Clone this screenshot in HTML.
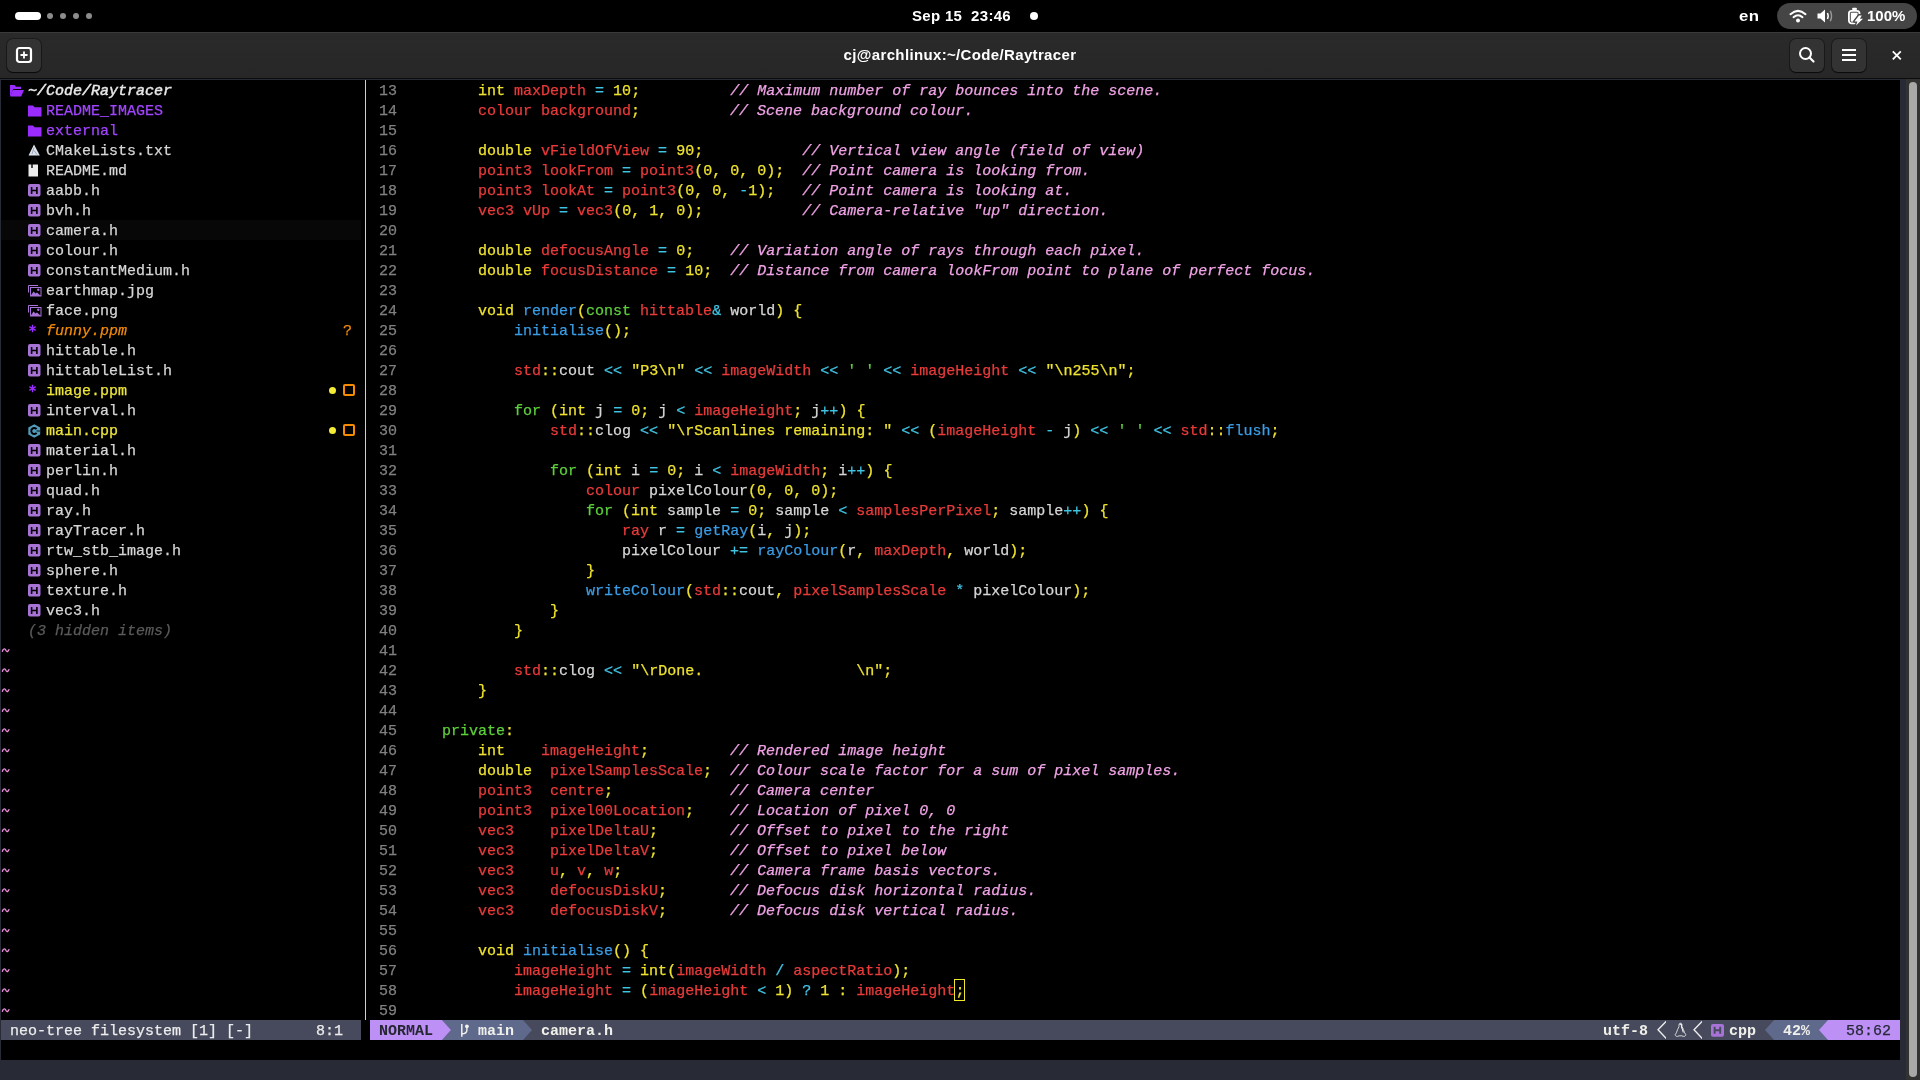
<!DOCTYPE html>
<html><head><meta charset="utf-8"><style>
*{margin:0;padding:0;box-sizing:border-box}
html,body{width:1920px;height:1080px;overflow:hidden;background:#000}
body{position:relative;font-family:"Liberation Sans",sans-serif}
#term{position:absolute;left:0;top:0;width:1920px;height:1080px;will-change:transform}
.row{position:absolute;height:20px;line-height:20px;white-space:pre;font-family:"Liberation Mono",monospace;font-size:15px;color:#d6d6d6;-webkit-text-stroke:0.25px currentColor}
.ic{position:absolute}
.yel{color:#eee22e} .red{color:#ea3a3a} .grn{color:#5cd03a} .blu{color:#3a9de6} .cya{color:#40c4e4} .wht{color:#d6d6d6}
.cmt{color:#f0a2e6;font-style:italic}
.lnr{color:#808080}
.root{color:#e8e8e8;font-style:italic;-webkit-text-stroke:0.45px #e8e8e8}
.dirn{color:#a244ff}
.fn{color:#d6d6d6}
.untr{color:#f28a0a;font-style:italic}
.modn{color:#ece43a}
.orn{color:#f28a0a}
.star{color:#9a2cff}
.hid{color:#5a5a5a;font-style:italic}
.tilde{color:#e07ad0}
.stw{color:#ececec}
.stb{color:#f0f0ea;font-weight:bold;-webkit-text-stroke:0}
.stn{color:#262633;font-weight:bold;-webkit-text-stroke:0}
.stn2{color:#262836}
.dot{position:absolute;width:7.5px;height:7.5px;border-radius:50%;background:#f4ec36}
.sq{position:absolute;width:12px;height:12px;border:2px solid #f88a00;border-radius:2px}
</style></head><body>
<!-- top bar -->
<div style="position:absolute;left:0;top:0;width:1920px;height:32px;background:#000"></div>
<div style="position:absolute;left:15px;top:12px;width:26px;height:8px;border-radius:4px;background:#fff"></div>
<div style="position:absolute;left:47px;top:13px;width:6px;height:6px;border-radius:50%;background:#8c8c8c"></div>
<div style="position:absolute;left:60px;top:13px;width:6px;height:6px;border-radius:50%;background:#8c8c8c"></div>
<div style="position:absolute;left:73px;top:13px;width:6px;height:6px;border-radius:50%;background:#8c8c8c"></div>
<div style="position:absolute;left:86px;top:13px;width:6px;height:6px;border-radius:50%;background:#8c8c8c"></div>
<div style="position:absolute;left:912px;top:5px;height:22px;line-height:22px;font-size:15px;font-weight:bold;color:#fff;white-space:pre;letter-spacing:0.3px;will-change:transform">Sep 15  23:46</div>
<div style="position:absolute;left:1030px;top:12px;width:8px;height:8px;border-radius:50%;background:#fff"></div>
<div style="position:absolute;left:1739px;top:5px;height:22px;line-height:22px;font-size:15px;font-weight:bold;color:#fff;letter-spacing:0.4px;transform:scaleX(1.12);transform-origin:0 0;will-change:transform">en</div>
<div style="position:absolute;left:1777px;top:3px;width:140px;height:26px;border-radius:13px;background:#454545"></div>
<svg style="position:absolute;left:1789px;top:9px" width="18" height="14" viewBox="0 0 18 14"><path d="M1.5 5.2Q9 -1.5 16.5 5.2" stroke="#fff" stroke-width="2" fill="none" stroke-linecap="round"/><path d="M4.5 8.2Q9 4.2 13.5 8.2" stroke="#fff" stroke-width="2" fill="none" stroke-linecap="round"/><circle cx="9" cy="11.5" r="2" fill="#fff"/></svg>
<svg style="position:absolute;left:1817px;top:8px" width="18" height="16" viewBox="0 0 18 16"><path d="M0.5 5.5H3.5L8 1.5V14.5L3.5 10.5H0.5z" fill="#fff"/><path d="M10.5 5Q12 8 10.5 11" stroke="#fff" stroke-width="1.6" fill="none"/><path d="M13.3 2.8Q15.8 8 13.3 13.2" stroke="#9a9a9a" stroke-width="1.4" fill="none"/></svg>
<svg style="position:absolute;left:1847px;top:7px" width="19" height="19" viewBox="0 0 19 19"><rect x="5.2" y="0.8" width="4.6" height="2.6" rx="0.8" fill="#fff"/><rect x="1.9" y="3.8" width="10.6" height="12.6" rx="2.6" fill="none" stroke="#fff" stroke-width="1.8"/><rect x="3.8" y="5.7" width="6.8" height="8.9" fill="#fff"/><path d="M12 8.4L7.4 14.4H10.4L9 18.4L16 11.8H12.9L14.8 8.4z" fill="#454545" stroke="#454545" stroke-width="2.6" stroke-linejoin="round"/><path d="M12 8.4L7.4 14.4H10.4L9 18.4L16 11.8H12.9L14.8 8.4z" fill="#fff"/></svg>
<div style="position:absolute;left:1867px;top:5px;height:22px;line-height:22px;font-size:15px;font-weight:bold;color:#fff;will-change:transform">100%</div>
<!-- title bar -->
<div style="position:absolute;left:0;top:32px;width:1920px;height:47px;background:linear-gradient(#2a2a2a,#272727);border-top:1px solid #3a3a3a;border-bottom:1px solid #0c0c0c"></div>
<div style="position:absolute;left:7px;top:38.5px;width:34px;height:33.5px;border-radius:6px;background:#333333;box-shadow:0 0 0 1px rgba(0,0,0,0.35),0 1px 1px rgba(0,0,0,0.6)"></div>
<svg style="position:absolute;left:15px;top:46px" width="18" height="18" viewBox="0 0 18 18"><rect x="2" y="2" width="14" height="14" rx="2.5" fill="none" stroke="#fff" stroke-width="2.2"/><path d="M9 5.5v7M5.5 9h7" stroke="#fff" stroke-width="1.8"/></svg>
<div style="position:absolute;left:0;top:44px;width:1920px;text-align:center;height:22px;line-height:22px;font-size:15px;font-weight:bold;color:#fff;letter-spacing:0.35px;will-change:transform">cj@archlinux:~/Code/Raytracer</div>
<div style="position:absolute;left:1790px;top:38.5px;width:34px;height:33.5px;border-radius:6px;background:#333333;box-shadow:0 0 0 1px rgba(0,0,0,0.35),0 1px 1px rgba(0,0,0,0.6)"></div>
<svg style="position:absolute;left:1797px;top:45px" width="20" height="20" viewBox="0 0 20 20"><circle cx="8.5" cy="8.5" r="5.5" stroke="#fff" stroke-width="2" fill="none"/><path d="M12.5 12.5L16.5 16.5" stroke="#fff" stroke-width="2.2" stroke-linecap="round"/></svg>
<div style="position:absolute;left:1832px;top:38.5px;width:34px;height:33.5px;border-radius:6px;background:#333333;box-shadow:0 0 0 1px rgba(0,0,0,0.35),0 1px 1px rgba(0,0,0,0.6)"></div>
<svg style="position:absolute;left:1839px;top:45px" width="20" height="20" viewBox="0 0 20 20"><path d="M3 5h14M3 10h14M3 15h14" stroke="#fff" stroke-width="1.8"/></svg>
<svg style="position:absolute;left:1889px;top:47px" width="16" height="16" viewBox="0 0 16 16"><path d="M3.8 4.3L11.8 12.3M11.8 4.3L3.8 12.3" stroke="#fff" stroke-width="1.8"/></svg>
<!-- terminal frame -->
<div style="position:absolute;left:0;top:79px;width:1920px;height:1px;background:#282a36"></div>
<div style="position:absolute;left:0;top:79px;width:1px;height:1001px;background:#282a36"></div>
<div style="position:absolute;left:0;top:1060px;width:1906px;height:20px;background:#282a36"></div>
<div style="position:absolute;left:1900px;top:79px;width:6px;height:1001px;background:#282a36"></div>
<div style="position:absolute;left:1906px;top:79px;width:14px;height:1001px;background:#323232"></div>
<div style="position:absolute;left:1909px;top:82px;width:8px;height:995px;border-radius:4px;background:#a8a8a6"></div>
<div style="position:absolute;left:1px;top:220px;width:360px;height:20px;background:#070707"></div>
<div style="position:absolute;left:365px;top:80px;width:1px;height:940px;background:#d0d0d0"></div>
<div style="position:absolute;left:1px;top:1020px;width:360px;height:20px;background:#474a5c"></div><div style="position:absolute;left:370px;top:1020px;width:1530px;height:20px;background:#474a5c"></div><div style="position:absolute;left:370px;top:1020px;width:72px;height:20px;background:#bc90f5"></div><svg style="position:absolute;left:442px;top:1020px" width="9" height="20"><path d="M0 0H9V20H0L9 10z" fill="#5f698c"/><path d="M0 0L9 10L0 20z" fill="#bc90f5"/></svg><div style="position:absolute;left:451px;top:1020px;width:72px;height:20px;background:#5f698c"></div><svg style="position:absolute;left:523px;top:1020px" width="9" height="20"><path d="M0 0L9 10L0 20z" fill="#5f698c"/></svg><svg style="position:absolute;left:460px;top:1020px" width="9" height="20" viewBox="0 0 9 20"><path d="M1.8 4V16.8" stroke="#f2f2ec" stroke-width="1.5" fill="none"/><path d="M6.9 6.5V10Q6.9 13.8 1.8 13.8" stroke="#f2f2ec" stroke-width="1.4" fill="none"/><circle cx="6.9" cy="6.3" r="1.9" fill="#f2f2ec"/></svg><svg style="position:absolute;left:1657px;top:1020px" width="9" height="20" viewBox="0 0 9 20"><path d="M9.3 1.2L1 9.8L9.3 18.6" stroke="#f0f0f0" stroke-width="1.35" fill="none"/></svg><svg style="position:absolute;left:1693px;top:1020px" width="9" height="20" viewBox="0 0 9 20"><path d="M9.3 1.2L1 9.8L9.3 18.6" stroke="#f0f0f0" stroke-width="1.35" fill="none"/></svg><svg style="position:absolute;left:1674px;top:1020px" width="13" height="20" viewBox="0 0 13 20"><path d="M6.5 3.2C5.1 3.2 4.9 4.8 5 6.5C4.3 8.5 2.9 10.3 2.4 12.8L1.2 14.6C1.2 16 2.6 16.6 3.5 16.4L5.2 15.8H7.8L9.5 16.4C10.4 16.6 11.8 16 11.8 14.6L10.6 12.8C10.1 10.3 8.7 8.5 8 6.5C8.1 4.8 7.9 3.2 6.5 3.2z" stroke="#e8e8e8" stroke-width="0.9" fill="none"/><path d="M5.6 4.5Q6.5 3.6 7.4 4.5L7.5 7Q8.6 9.5 9.3 12.5" stroke="#f0f0f0" stroke-width="1.1" fill="none"/></svg><svg style="position:absolute;left:1711px;top:1024px" width="13" height="13" viewBox="0 0 13 13"><rect x="0" y="0" width="13" height="12.8" rx="2" fill="#a873d6"/><path d="M3.6 2.8v7M9.2 2.8v7M3.6 6.3h5.6" stroke="#474a5c" stroke-width="1.9" fill="none"/></svg><div style="position:absolute;left:1774px;top:1020px;width:54px;height:20px;background:#5f698c"></div><svg style="position:absolute;left:1765px;top:1020px" width="9" height="20"><path d="M9 0L0 10L9 20z" fill="#5f698c"/></svg><div style="position:absolute;left:1828px;top:1020px;width:72px;height:20px;background:#bc90f5"></div><svg style="position:absolute;left:1819px;top:1020px" width="9" height="20"><path d="M9 0L0 10L9 20z" fill="#bc90f5"/></svg>
<div id="term"><div class="row" style="top:82px;left:379.00px"><span class="lnr">13</span></div><div class="row" style="top:82px;left:406.00px">        <span class="yel">int</span> <span class="red">maxDepth</span> <span class="cya">=</span> <span class="yel">10</span><span class="yel">;</span>          <span class="cmt">// Maximum number of ray bounces into the scene.</span></div><div class="row" style="top:102px;left:379.00px"><span class="lnr">14</span></div><div class="row" style="top:102px;left:406.00px">        <span class="red">colour</span> <span class="red">background</span><span class="yel">;</span>          <span class="cmt">// Scene background colour.</span></div><div class="row" style="top:122px;left:379.00px"><span class="lnr">15</span></div><div class="row" style="top:142px;left:379.00px"><span class="lnr">16</span></div><div class="row" style="top:142px;left:406.00px">        <span class="yel">double</span> <span class="red">vFieldOfView</span> <span class="cya">=</span> <span class="yel">90</span><span class="yel">;</span>           <span class="cmt">// Vertical view angle (field of view)</span></div><div class="row" style="top:162px;left:379.00px"><span class="lnr">17</span></div><div class="row" style="top:162px;left:406.00px">        <span class="red">point3</span> <span class="red">lookFrom</span> <span class="cya">=</span> <span class="red">point3</span><span class="yel">(</span><span class="yel">0</span><span class="yel">,</span> <span class="yel">0</span><span class="yel">,</span> <span class="yel">0</span><span class="yel">)</span><span class="yel">;</span>  <span class="cmt">// Point camera is looking from.</span></div><div class="row" style="top:182px;left:379.00px"><span class="lnr">18</span></div><div class="row" style="top:182px;left:406.00px">        <span class="red">point3</span> <span class="red">lookAt</span> <span class="cya">=</span> <span class="red">point3</span><span class="yel">(</span><span class="yel">0</span><span class="yel">,</span> <span class="yel">0</span><span class="yel">,</span> <span class="cya">-</span><span class="yel">1</span><span class="yel">)</span><span class="yel">;</span>   <span class="cmt">// Point camera is looking at.</span></div><div class="row" style="top:202px;left:379.00px"><span class="lnr">19</span></div><div class="row" style="top:202px;left:406.00px">        <span class="red">vec3</span> <span class="red">vUp</span> <span class="cya">=</span> <span class="red">vec3</span><span class="yel">(</span><span class="yel">0</span><span class="yel">,</span> <span class="yel">1</span><span class="yel">,</span> <span class="yel">0</span><span class="yel">)</span><span class="yel">;</span>           <span class="cmt">// Camera-relative &quot;up&quot; direction.</span></div><div class="row" style="top:222px;left:379.00px"><span class="lnr">20</span></div><div class="row" style="top:242px;left:379.00px"><span class="lnr">21</span></div><div class="row" style="top:242px;left:406.00px">        <span class="yel">double</span> <span class="red">defocusAngle</span> <span class="cya">=</span> <span class="yel">0</span><span class="yel">;</span>    <span class="cmt">// Variation angle of rays through each pixel.</span></div><div class="row" style="top:262px;left:379.00px"><span class="lnr">22</span></div><div class="row" style="top:262px;left:406.00px">        <span class="yel">double</span> <span class="red">focusDistance</span> <span class="cya">=</span> <span class="yel">10</span><span class="yel">;</span>  <span class="cmt">// Distance from camera lookFrom point to plane of perfect focus.</span></div><div class="row" style="top:282px;left:379.00px"><span class="lnr">23</span></div><div class="row" style="top:302px;left:379.00px"><span class="lnr">24</span></div><div class="row" style="top:302px;left:406.00px">        <span class="yel">void</span> <span class="blu">render</span><span class="yel">(</span><span class="grn">const</span> <span class="red">hittable</span><span class="cya">&amp;</span> <span class="wht">world</span><span class="yel">)</span> <span class="yel">{</span></div><div class="row" style="top:322px;left:379.00px"><span class="lnr">25</span></div><div class="row" style="top:322px;left:406.00px">            <span class="blu">initialise</span><span class="yel">(</span><span class="yel">)</span><span class="yel">;</span></div><div class="row" style="top:342px;left:379.00px"><span class="lnr">26</span></div><div class="row" style="top:362px;left:379.00px"><span class="lnr">27</span></div><div class="row" style="top:362px;left:406.00px">            <span class="red">std</span><span class="yel">::</span><span class="wht">cout</span> <span class="cya">&lt;&lt;</span> <span class="yel">&quot;P3\n&quot;</span> <span class="cya">&lt;&lt;</span> <span class="red">imageWidth</span> <span class="cya">&lt;&lt;</span> <span class="grn">&#x27; &#x27;</span> <span class="cya">&lt;&lt;</span> <span class="red">imageHeight</span> <span class="cya">&lt;&lt;</span> <span class="yel">&quot;\n255\n&quot;</span><span class="yel">;</span></div><div class="row" style="top:382px;left:379.00px"><span class="lnr">28</span></div><div class="row" style="top:402px;left:379.00px"><span class="lnr">29</span></div><div class="row" style="top:402px;left:406.00px">            <span class="grn">for</span> <span class="yel">(</span><span class="yel">int</span> <span class="wht">j</span> <span class="cya">=</span> <span class="yel">0</span><span class="yel">;</span> <span class="wht">j</span> <span class="cya">&lt;</span> <span class="red">imageHeight</span><span class="yel">;</span> <span class="wht">j</span><span class="cya">++</span><span class="yel">)</span> <span class="yel">{</span></div><div class="row" style="top:422px;left:379.00px"><span class="lnr">30</span></div><div class="row" style="top:422px;left:406.00px">                <span class="red">std</span><span class="yel">::</span><span class="wht">clog</span> <span class="cya">&lt;&lt;</span> <span class="yel">&quot;\rScanlines remaining: &quot;</span> <span class="cya">&lt;&lt;</span> <span class="yel">(</span><span class="red">imageHeight</span> <span class="cya">-</span> <span class="wht">j</span><span class="yel">)</span> <span class="cya">&lt;&lt;</span> <span class="grn">&#x27; &#x27;</span> <span class="cya">&lt;&lt;</span> <span class="red">std</span><span class="yel">::</span><span class="blu">flush</span><span class="yel">;</span></div><div class="row" style="top:442px;left:379.00px"><span class="lnr">31</span></div><div class="row" style="top:462px;left:379.00px"><span class="lnr">32</span></div><div class="row" style="top:462px;left:406.00px">                <span class="grn">for</span> <span class="yel">(</span><span class="yel">int</span> <span class="wht">i</span> <span class="cya">=</span> <span class="yel">0</span><span class="yel">;</span> <span class="wht">i</span> <span class="cya">&lt;</span> <span class="red">imageWidth</span><span class="yel">;</span> <span class="wht">i</span><span class="cya">++</span><span class="yel">)</span> <span class="yel">{</span></div><div class="row" style="top:482px;left:379.00px"><span class="lnr">33</span></div><div class="row" style="top:482px;left:406.00px">                    <span class="red">colour</span> <span class="wht">pixelColour</span><span class="yel">(</span><span class="yel">0</span><span class="yel">,</span> <span class="yel">0</span><span class="yel">,</span> <span class="yel">0</span><span class="yel">)</span><span class="yel">;</span></div><div class="row" style="top:502px;left:379.00px"><span class="lnr">34</span></div><div class="row" style="top:502px;left:406.00px">                    <span class="grn">for</span> <span class="yel">(</span><span class="yel">int</span> <span class="wht">sample</span> <span class="cya">=</span> <span class="yel">0</span><span class="yel">;</span> <span class="wht">sample</span> <span class="cya">&lt;</span> <span class="red">samplesPerPixel</span><span class="yel">;</span> <span class="wht">sample</span><span class="cya">++</span><span class="yel">)</span> <span class="yel">{</span></div><div class="row" style="top:522px;left:379.00px"><span class="lnr">35</span></div><div class="row" style="top:522px;left:406.00px">                        <span class="red">ray</span> <span class="wht">r</span> <span class="cya">=</span> <span class="blu">getRay</span><span class="yel">(</span><span class="wht">i</span><span class="yel">,</span> <span class="wht">j</span><span class="yel">)</span><span class="yel">;</span></div><div class="row" style="top:542px;left:379.00px"><span class="lnr">36</span></div><div class="row" style="top:542px;left:406.00px">                        <span class="wht">pixelColour</span> <span class="cya">+=</span> <span class="blu">rayColour</span><span class="yel">(</span><span class="wht">r</span><span class="yel">,</span> <span class="red">maxDepth</span><span class="yel">,</span> <span class="wht">world</span><span class="yel">)</span><span class="yel">;</span></div><div class="row" style="top:562px;left:379.00px"><span class="lnr">37</span></div><div class="row" style="top:562px;left:406.00px">                    <span class="yel">}</span></div><div class="row" style="top:582px;left:379.00px"><span class="lnr">38</span></div><div class="row" style="top:582px;left:406.00px">                    <span class="blu">writeColour</span><span class="yel">(</span><span class="red">std</span><span class="yel">::</span><span class="wht">cout</span><span class="yel">,</span> <span class="red">pixelSamplesScale</span> <span class="cya">*</span> <span class="wht">pixelColour</span><span class="yel">)</span><span class="yel">;</span></div><div class="row" style="top:602px;left:379.00px"><span class="lnr">39</span></div><div class="row" style="top:602px;left:406.00px">                <span class="yel">}</span></div><div class="row" style="top:622px;left:379.00px"><span class="lnr">40</span></div><div class="row" style="top:622px;left:406.00px">            <span class="yel">}</span></div><div class="row" style="top:642px;left:379.00px"><span class="lnr">41</span></div><div class="row" style="top:662px;left:379.00px"><span class="lnr">42</span></div><div class="row" style="top:662px;left:406.00px">            <span class="red">std</span><span class="yel">::</span><span class="wht">clog</span> <span class="cya">&lt;&lt;</span> <span class="yel">&quot;\rDone.                 \n&quot;</span><span class="yel">;</span></div><div class="row" style="top:682px;left:379.00px"><span class="lnr">43</span></div><div class="row" style="top:682px;left:406.00px">        <span class="yel">}</span></div><div class="row" style="top:702px;left:379.00px"><span class="lnr">44</span></div><div class="row" style="top:722px;left:379.00px"><span class="lnr">45</span></div><div class="row" style="top:722px;left:406.00px">    <span class="grn">private</span><span class="yel">:</span></div><div class="row" style="top:742px;left:379.00px"><span class="lnr">46</span></div><div class="row" style="top:742px;left:406.00px">        <span class="yel">int</span>    <span class="red">imageHeight</span><span class="yel">;</span>         <span class="cmt">// Rendered image height</span></div><div class="row" style="top:762px;left:379.00px"><span class="lnr">47</span></div><div class="row" style="top:762px;left:406.00px">        <span class="yel">double</span>  <span class="red">pixelSamplesScale</span><span class="yel">;</span>  <span class="cmt">// Colour scale factor for a sum of pixel samples.</span></div><div class="row" style="top:782px;left:379.00px"><span class="lnr">48</span></div><div class="row" style="top:782px;left:406.00px">        <span class="red">point3</span>  <span class="red">centre</span><span class="yel">;</span>             <span class="cmt">// Camera center</span></div><div class="row" style="top:802px;left:379.00px"><span class="lnr">49</span></div><div class="row" style="top:802px;left:406.00px">        <span class="red">point3</span>  <span class="red">pixel00Location</span><span class="yel">;</span>    <span class="cmt">// Location of pixel 0, 0</span></div><div class="row" style="top:822px;left:379.00px"><span class="lnr">50</span></div><div class="row" style="top:822px;left:406.00px">        <span class="red">vec3</span>    <span class="red">pixelDeltaU</span><span class="yel">;</span>        <span class="cmt">// Offset to pixel to the right</span></div><div class="row" style="top:842px;left:379.00px"><span class="lnr">51</span></div><div class="row" style="top:842px;left:406.00px">        <span class="red">vec3</span>    <span class="red">pixelDeltaV</span><span class="yel">;</span>        <span class="cmt">// Offset to pixel below</span></div><div class="row" style="top:862px;left:379.00px"><span class="lnr">52</span></div><div class="row" style="top:862px;left:406.00px">        <span class="red">vec3</span>    <span class="red">u</span><span class="yel">,</span> <span class="red">v</span><span class="yel">,</span> <span class="red">w</span><span class="yel">;</span>            <span class="cmt">// Camera frame basis vectors.</span></div><div class="row" style="top:882px;left:379.00px"><span class="lnr">53</span></div><div class="row" style="top:882px;left:406.00px">        <span class="red">vec3</span>    <span class="red">defocusDiskU</span><span class="yel">;</span>       <span class="cmt">// Defocus disk horizontal radius.</span></div><div class="row" style="top:902px;left:379.00px"><span class="lnr">54</span></div><div class="row" style="top:902px;left:406.00px">        <span class="red">vec3</span>    <span class="red">defocusDiskV</span><span class="yel">;</span>       <span class="cmt">// Defocus disk vertical radius.</span></div><div class="row" style="top:922px;left:379.00px"><span class="lnr">55</span></div><div class="row" style="top:942px;left:379.00px"><span class="lnr">56</span></div><div class="row" style="top:942px;left:406.00px">        <span class="yel">void</span> <span class="blu">initialise</span><span class="yel">(</span><span class="yel">)</span> <span class="yel">{</span></div><div class="row" style="top:962px;left:379.00px"><span class="lnr">57</span></div><div class="row" style="top:962px;left:406.00px">            <span class="red">imageHeight</span> <span class="cya">=</span> <span class="yel">int</span><span class="yel">(</span><span class="red">imageWidth</span> <span class="cya">/</span> <span class="red">aspectRatio</span><span class="yel">)</span><span class="yel">;</span></div><div class="row" style="top:982px;left:379.00px"><span class="lnr">58</span></div><div class="row" style="top:982px;left:406.00px">            <span class="red">imageHeight</span> <span class="cya">=</span> <span class="yel">(</span><span class="red">imageHeight</span> <span class="cya">&lt;</span> <span class="yel">1</span><span class="yel">)</span> <span class="cya">?</span> <span class="yel">1</span> <span class="yel">:</span> <span class="red">imageHeight</span><span class="yel">;</span></div><div class="row" style="top:1002px;left:379.00px"><span class="lnr">59</span></div><div class="row" style="top:82px;left:28.00px"><span class="root">~/Code/Raytracer</span></div><div class="row" style="top:102px;left:46.00px"><span class="dirn">README_IMAGES</span></div><div class="row" style="top:122px;left:46.00px"><span class="dirn">external</span></div><div class="row" style="top:142px;left:46.00px"><span class="fn">CMakeLists.txt</span></div><div class="row" style="top:162px;left:46.00px"><span class="fn">README.md</span></div><div class="row" style="top:182px;left:46.00px"><span class="fn">aabb.h</span></div><div class="row" style="top:202px;left:46.00px"><span class="fn">bvh.h</span></div><div class="row" style="top:222px;left:46.00px"><span class="fn">camera.h</span></div><div class="row" style="top:242px;left:46.00px"><span class="fn">colour.h</span></div><div class="row" style="top:262px;left:46.00px"><span class="fn">constantMedium.h</span></div><div class="row" style="top:282px;left:46.00px"><span class="fn">earthmap.jpg</span></div><div class="row" style="top:302px;left:46.00px"><span class="fn">face.png</span></div><div class="row" style="top:322px;left:46.00px"><span class="untr">funny.ppm</span></div><div class="row" style="top:322px;left:343.00px"><span class="orn">?</span></div><div class="row" style="top:342px;left:46.00px"><span class="fn">hittable.h</span></div><div class="row" style="top:362px;left:46.00px"><span class="fn">hittableList.h</span></div><div class="row" style="top:382px;left:46.00px"><span class="modn">image.ppm</span></div><div class="row" style="top:402px;left:46.00px"><span class="fn">interval.h</span></div><div class="row" style="top:422px;left:46.00px"><span class="modn">main.cpp</span></div><div class="row" style="top:442px;left:46.00px"><span class="fn">material.h</span></div><div class="row" style="top:462px;left:46.00px"><span class="fn">perlin.h</span></div><div class="row" style="top:482px;left:46.00px"><span class="fn">quad.h</span></div><div class="row" style="top:502px;left:46.00px"><span class="fn">ray.h</span></div><div class="row" style="top:522px;left:46.00px"><span class="fn">rayTracer.h</span></div><div class="row" style="top:542px;left:46.00px"><span class="fn">rtw_stb_image.h</span></div><div class="row" style="top:562px;left:46.00px"><span class="fn">sphere.h</span></div><div class="row" style="top:582px;left:46.00px"><span class="fn">texture.h</span></div><div class="row" style="top:602px;left:46.00px"><span class="fn">vec3.h</span></div><div class="row" style="top:622px;left:28.00px"><span class="hid">(3 hidden items)</span></div><div class="row" style="top:1022px;left:10.00px"><span class="stw">neo-tree filesystem [1] [-]</span></div><div class="row" style="top:1022px;left:316.00px"><span class="stw">8:1</span></div><div class="row" style="top:1022px;left:379.00px"><span class="stn">NORMAL</span></div><div class="row" style="top:1022px;left:478.00px"><span class="stb">main</span></div><div class="row" style="top:1022px;left:541.00px"><span class="stb">camera.h</span></div><div class="row" style="top:1022px;left:1603.00px"><span class="stb">utf-8</span></div><div class="row" style="top:1022px;left:1729.00px"><span class="stb">cpp</span></div><div class="row" style="top:1022px;left:1783.00px"><span class="stb">42%</span></div><div class="row" style="top:1022px;left:1846.00px"><span class="stn2">58:62</span></div></div>
<svg class="ic" style="left:10px;top:85px" width="14" height="12" viewBox="0 0 14 12"><path d="M0 0h4.5l1.5 1.8H11V4H3.2L0.6 11H0z" fill="#9a2cff"/><path d="M2.8 5H14L11.2 11.5H0.3z" fill="#9a2cff"/></svg><svg class="ic" style="left:28px;top:105px" width="14" height="12" viewBox="0 0 14 12"><path d="M0 0.5h5l1.5 1.8H13.5V11.5H0z" fill="#9a2cff"/></svg><svg class="ic" style="left:28px;top:125px" width="14" height="12" viewBox="0 0 14 12"><path d="M0 0.5h5l1.5 1.8H13.5V11.5H0z" fill="#9a2cff"/></svg><svg class="ic" style="left:28px;top:144px" width="13" height="13" viewBox="0 0 13 13"><path d="M6 0.5L11.8 11.5H0.5z" fill="#dde3ec"/><path d="M6 3.5L4 10M6 6.5L9 10.5" stroke="#8a93a8" stroke-width="0.8" fill="none"/></svg><svg class="ic" style="left:28px;top:164px" width="12" height="13" viewBox="0 0 12 13"><path d="M0.5 0.5h2.8v3.4h1.4V0.5h5.3v11.9H0.5z" fill="#ececec"/></svg><svg class="ic" style="left:28px;top:184px" width="13" height="13" viewBox="0 0 13 13"><rect x="0" y="0" width="12.5" height="12.5" rx="2" fill="#a873d6"/><path d="M3.6 3v7M8.9 3v7M3.6 6.5h5.3" stroke="#000" stroke-width="1.6" fill="none"/></svg><svg class="ic" style="left:28px;top:204px" width="13" height="13" viewBox="0 0 13 13"><rect x="0" y="0" width="12.5" height="12.5" rx="2" fill="#a873d6"/><path d="M3.6 3v7M8.9 3v7M3.6 6.5h5.3" stroke="#000" stroke-width="1.6" fill="none"/></svg><svg class="ic" style="left:28px;top:224px" width="13" height="13" viewBox="0 0 13 13"><rect x="0" y="0" width="12.5" height="12.5" rx="2" fill="#a873d6"/><path d="M3.6 3v7M8.9 3v7M3.6 6.5h5.3" stroke="#000" stroke-width="1.6" fill="none"/></svg><svg class="ic" style="left:28px;top:244px" width="13" height="13" viewBox="0 0 13 13"><rect x="0" y="0" width="12.5" height="12.5" rx="2" fill="#a873d6"/><path d="M3.6 3v7M8.9 3v7M3.6 6.5h5.3" stroke="#000" stroke-width="1.6" fill="none"/></svg><svg class="ic" style="left:28px;top:264px" width="13" height="13" viewBox="0 0 13 13"><rect x="0" y="0" width="12.5" height="12.5" rx="2" fill="#a873d6"/><path d="M3.6 3v7M8.9 3v7M3.6 6.5h5.3" stroke="#000" stroke-width="1.6" fill="none"/></svg><svg class="ic" style="left:28px;top:285px" width="14" height="12" viewBox="0 0 14 12"><path d="M0.5 0.5H10M0.5 0.5V7.5" stroke="#a873d6" stroke-width="1" fill="none"/><rect x="2.5" y="2.5" width="10.5" height="8.5" fill="none" stroke="#a873d6" stroke-width="1"/><path d="M2.5 11L5.5 6.5L7.5 8.5L9 7.5L13 11z" fill="#a873d6"/><circle cx="10.3" cy="4.7" r="1.2" fill="#a873d6"/></svg><svg class="ic" style="left:28px;top:305px" width="14" height="12" viewBox="0 0 14 12"><path d="M0.5 0.5H10M0.5 0.5V7.5" stroke="#a873d6" stroke-width="1" fill="none"/><rect x="2.5" y="2.5" width="10.5" height="8.5" fill="none" stroke="#a873d6" stroke-width="1"/><path d="M2.5 11L5.5 6.5L7.5 8.5L9 7.5L13 11z" fill="#a873d6"/><circle cx="10.3" cy="4.7" r="1.2" fill="#a873d6"/></svg><svg class="ic" style="left:28px;top:320.5px" width="9" height="14" viewBox="0 0 9 14"><path d="M4.5 3.8V11.2M1.3 5.6L7.7 9.4M7.7 5.6L1.3 9.4" stroke="#9a2cff" stroke-width="1.3" fill="none"/></svg><svg class="ic" style="left:28px;top:344px" width="13" height="13" viewBox="0 0 13 13"><rect x="0" y="0" width="12.5" height="12.5" rx="2" fill="#a873d6"/><path d="M3.6 3v7M8.9 3v7M3.6 6.5h5.3" stroke="#000" stroke-width="1.6" fill="none"/></svg><svg class="ic" style="left:28px;top:364px" width="13" height="13" viewBox="0 0 13 13"><rect x="0" y="0" width="12.5" height="12.5" rx="2" fill="#a873d6"/><path d="M3.6 3v7M8.9 3v7M3.6 6.5h5.3" stroke="#000" stroke-width="1.6" fill="none"/></svg><svg class="ic" style="left:28px;top:380.5px" width="9" height="14" viewBox="0 0 9 14"><path d="M4.5 3.8V11.2M1.3 5.6L7.7 9.4M7.7 5.6L1.3 9.4" stroke="#9a2cff" stroke-width="1.3" fill="none"/></svg><div class="dot" style="left:328.5px;top:386.5px"></div><div class="sq" style="left:343px;top:384px"></div><svg class="ic" style="left:28px;top:404px" width="13" height="13" viewBox="0 0 13 13"><rect x="0" y="0" width="12.5" height="12.5" rx="2" fill="#a873d6"/><path d="M3.6 3v7M8.9 3v7M3.6 6.5h5.3" stroke="#000" stroke-width="1.6" fill="none"/></svg><svg class="ic" style="left:28px;top:424px" width="13" height="14" viewBox="0 0 13 14"><path d="M6.25 0.3L12.2 3.6V10.4L6.25 13.7L0.3 10.4V3.6z" fill="#519aba"/><path d="M8.6 5.1A3 3 0 1 0 8.6 8.9" stroke="#000" stroke-width="1.9" fill="none"/><path d="M8.5 7h3.5" stroke="#000" stroke-width="0.9"/></svg><div class="dot" style="left:328.5px;top:426.5px"></div><div class="sq" style="left:343px;top:424px"></div><svg class="ic" style="left:28px;top:444px" width="13" height="13" viewBox="0 0 13 13"><rect x="0" y="0" width="12.5" height="12.5" rx="2" fill="#a873d6"/><path d="M3.6 3v7M8.9 3v7M3.6 6.5h5.3" stroke="#000" stroke-width="1.6" fill="none"/></svg><svg class="ic" style="left:28px;top:464px" width="13" height="13" viewBox="0 0 13 13"><rect x="0" y="0" width="12.5" height="12.5" rx="2" fill="#a873d6"/><path d="M3.6 3v7M8.9 3v7M3.6 6.5h5.3" stroke="#000" stroke-width="1.6" fill="none"/></svg><svg class="ic" style="left:28px;top:484px" width="13" height="13" viewBox="0 0 13 13"><rect x="0" y="0" width="12.5" height="12.5" rx="2" fill="#a873d6"/><path d="M3.6 3v7M8.9 3v7M3.6 6.5h5.3" stroke="#000" stroke-width="1.6" fill="none"/></svg><svg class="ic" style="left:28px;top:504px" width="13" height="13" viewBox="0 0 13 13"><rect x="0" y="0" width="12.5" height="12.5" rx="2" fill="#a873d6"/><path d="M3.6 3v7M8.9 3v7M3.6 6.5h5.3" stroke="#000" stroke-width="1.6" fill="none"/></svg><svg class="ic" style="left:28px;top:524px" width="13" height="13" viewBox="0 0 13 13"><rect x="0" y="0" width="12.5" height="12.5" rx="2" fill="#a873d6"/><path d="M3.6 3v7M8.9 3v7M3.6 6.5h5.3" stroke="#000" stroke-width="1.6" fill="none"/></svg><svg class="ic" style="left:28px;top:544px" width="13" height="13" viewBox="0 0 13 13"><rect x="0" y="0" width="12.5" height="12.5" rx="2" fill="#a873d6"/><path d="M3.6 3v7M8.9 3v7M3.6 6.5h5.3" stroke="#000" stroke-width="1.6" fill="none"/></svg><svg class="ic" style="left:28px;top:564px" width="13" height="13" viewBox="0 0 13 13"><rect x="0" y="0" width="12.5" height="12.5" rx="2" fill="#a873d6"/><path d="M3.6 3v7M8.9 3v7M3.6 6.5h5.3" stroke="#000" stroke-width="1.6" fill="none"/></svg><svg class="ic" style="left:28px;top:584px" width="13" height="13" viewBox="0 0 13 13"><rect x="0" y="0" width="12.5" height="12.5" rx="2" fill="#a873d6"/><path d="M3.6 3v7M8.9 3v7M3.6 6.5h5.3" stroke="#000" stroke-width="1.6" fill="none"/></svg><svg class="ic" style="left:28px;top:604px" width="13" height="13" viewBox="0 0 13 13"><rect x="0" y="0" width="12.5" height="12.5" rx="2" fill="#a873d6"/><path d="M3.6 3v7M8.9 3v7M3.6 6.5h5.3" stroke="#000" stroke-width="1.6" fill="none"/></svg><svg class="ic" style="left:1px;top:646px" width="10" height="8" viewBox="0 0 10 8"><path d="M1.4 5.2Q2.1 2.8 3.4 2.9Q4.3 3.0 5.0 4.5Q5.8 5.9 6.8 5.3Q7.5 4.8 7.9 3.6" stroke="#ef8fe0" stroke-width="1.4" fill="none" stroke-linecap="round"/></svg><svg class="ic" style="left:1px;top:666px" width="10" height="8" viewBox="0 0 10 8"><path d="M1.4 5.2Q2.1 2.8 3.4 2.9Q4.3 3.0 5.0 4.5Q5.8 5.9 6.8 5.3Q7.5 4.8 7.9 3.6" stroke="#ef8fe0" stroke-width="1.4" fill="none" stroke-linecap="round"/></svg><svg class="ic" style="left:1px;top:686px" width="10" height="8" viewBox="0 0 10 8"><path d="M1.4 5.2Q2.1 2.8 3.4 2.9Q4.3 3.0 5.0 4.5Q5.8 5.9 6.8 5.3Q7.5 4.8 7.9 3.6" stroke="#ef8fe0" stroke-width="1.4" fill="none" stroke-linecap="round"/></svg><svg class="ic" style="left:1px;top:706px" width="10" height="8" viewBox="0 0 10 8"><path d="M1.4 5.2Q2.1 2.8 3.4 2.9Q4.3 3.0 5.0 4.5Q5.8 5.9 6.8 5.3Q7.5 4.8 7.9 3.6" stroke="#ef8fe0" stroke-width="1.4" fill="none" stroke-linecap="round"/></svg><svg class="ic" style="left:1px;top:726px" width="10" height="8" viewBox="0 0 10 8"><path d="M1.4 5.2Q2.1 2.8 3.4 2.9Q4.3 3.0 5.0 4.5Q5.8 5.9 6.8 5.3Q7.5 4.8 7.9 3.6" stroke="#ef8fe0" stroke-width="1.4" fill="none" stroke-linecap="round"/></svg><svg class="ic" style="left:1px;top:746px" width="10" height="8" viewBox="0 0 10 8"><path d="M1.4 5.2Q2.1 2.8 3.4 2.9Q4.3 3.0 5.0 4.5Q5.8 5.9 6.8 5.3Q7.5 4.8 7.9 3.6" stroke="#ef8fe0" stroke-width="1.4" fill="none" stroke-linecap="round"/></svg><svg class="ic" style="left:1px;top:766px" width="10" height="8" viewBox="0 0 10 8"><path d="M1.4 5.2Q2.1 2.8 3.4 2.9Q4.3 3.0 5.0 4.5Q5.8 5.9 6.8 5.3Q7.5 4.8 7.9 3.6" stroke="#ef8fe0" stroke-width="1.4" fill="none" stroke-linecap="round"/></svg><svg class="ic" style="left:1px;top:786px" width="10" height="8" viewBox="0 0 10 8"><path d="M1.4 5.2Q2.1 2.8 3.4 2.9Q4.3 3.0 5.0 4.5Q5.8 5.9 6.8 5.3Q7.5 4.8 7.9 3.6" stroke="#ef8fe0" stroke-width="1.4" fill="none" stroke-linecap="round"/></svg><svg class="ic" style="left:1px;top:806px" width="10" height="8" viewBox="0 0 10 8"><path d="M1.4 5.2Q2.1 2.8 3.4 2.9Q4.3 3.0 5.0 4.5Q5.8 5.9 6.8 5.3Q7.5 4.8 7.9 3.6" stroke="#ef8fe0" stroke-width="1.4" fill="none" stroke-linecap="round"/></svg><svg class="ic" style="left:1px;top:826px" width="10" height="8" viewBox="0 0 10 8"><path d="M1.4 5.2Q2.1 2.8 3.4 2.9Q4.3 3.0 5.0 4.5Q5.8 5.9 6.8 5.3Q7.5 4.8 7.9 3.6" stroke="#ef8fe0" stroke-width="1.4" fill="none" stroke-linecap="round"/></svg><svg class="ic" style="left:1px;top:846px" width="10" height="8" viewBox="0 0 10 8"><path d="M1.4 5.2Q2.1 2.8 3.4 2.9Q4.3 3.0 5.0 4.5Q5.8 5.9 6.8 5.3Q7.5 4.8 7.9 3.6" stroke="#ef8fe0" stroke-width="1.4" fill="none" stroke-linecap="round"/></svg><svg class="ic" style="left:1px;top:866px" width="10" height="8" viewBox="0 0 10 8"><path d="M1.4 5.2Q2.1 2.8 3.4 2.9Q4.3 3.0 5.0 4.5Q5.8 5.9 6.8 5.3Q7.5 4.8 7.9 3.6" stroke="#ef8fe0" stroke-width="1.4" fill="none" stroke-linecap="round"/></svg><svg class="ic" style="left:1px;top:886px" width="10" height="8" viewBox="0 0 10 8"><path d="M1.4 5.2Q2.1 2.8 3.4 2.9Q4.3 3.0 5.0 4.5Q5.8 5.9 6.8 5.3Q7.5 4.8 7.9 3.6" stroke="#ef8fe0" stroke-width="1.4" fill="none" stroke-linecap="round"/></svg><svg class="ic" style="left:1px;top:906px" width="10" height="8" viewBox="0 0 10 8"><path d="M1.4 5.2Q2.1 2.8 3.4 2.9Q4.3 3.0 5.0 4.5Q5.8 5.9 6.8 5.3Q7.5 4.8 7.9 3.6" stroke="#ef8fe0" stroke-width="1.4" fill="none" stroke-linecap="round"/></svg><svg class="ic" style="left:1px;top:926px" width="10" height="8" viewBox="0 0 10 8"><path d="M1.4 5.2Q2.1 2.8 3.4 2.9Q4.3 3.0 5.0 4.5Q5.8 5.9 6.8 5.3Q7.5 4.8 7.9 3.6" stroke="#ef8fe0" stroke-width="1.4" fill="none" stroke-linecap="round"/></svg><svg class="ic" style="left:1px;top:946px" width="10" height="8" viewBox="0 0 10 8"><path d="M1.4 5.2Q2.1 2.8 3.4 2.9Q4.3 3.0 5.0 4.5Q5.8 5.9 6.8 5.3Q7.5 4.8 7.9 3.6" stroke="#ef8fe0" stroke-width="1.4" fill="none" stroke-linecap="round"/></svg><svg class="ic" style="left:1px;top:966px" width="10" height="8" viewBox="0 0 10 8"><path d="M1.4 5.2Q2.1 2.8 3.4 2.9Q4.3 3.0 5.0 4.5Q5.8 5.9 6.8 5.3Q7.5 4.8 7.9 3.6" stroke="#ef8fe0" stroke-width="1.4" fill="none" stroke-linecap="round"/></svg><svg class="ic" style="left:1px;top:986px" width="10" height="8" viewBox="0 0 10 8"><path d="M1.4 5.2Q2.1 2.8 3.4 2.9Q4.3 3.0 5.0 4.5Q5.8 5.9 6.8 5.3Q7.5 4.8 7.9 3.6" stroke="#ef8fe0" stroke-width="1.4" fill="none" stroke-linecap="round"/></svg><svg class="ic" style="left:1px;top:1006px" width="10" height="8" viewBox="0 0 10 8"><path d="M1.4 5.2Q2.1 2.8 3.4 2.9Q4.3 3.0 5.0 4.5Q5.8 5.9 6.8 5.3Q7.5 4.8 7.9 3.6" stroke="#ef8fe0" stroke-width="1.4" fill="none" stroke-linecap="round"/></svg>
<div style="position:absolute;left:954px;top:979px;width:11px;height:22px;border:1.5px solid #f0e62a"></div>
</body></html>
